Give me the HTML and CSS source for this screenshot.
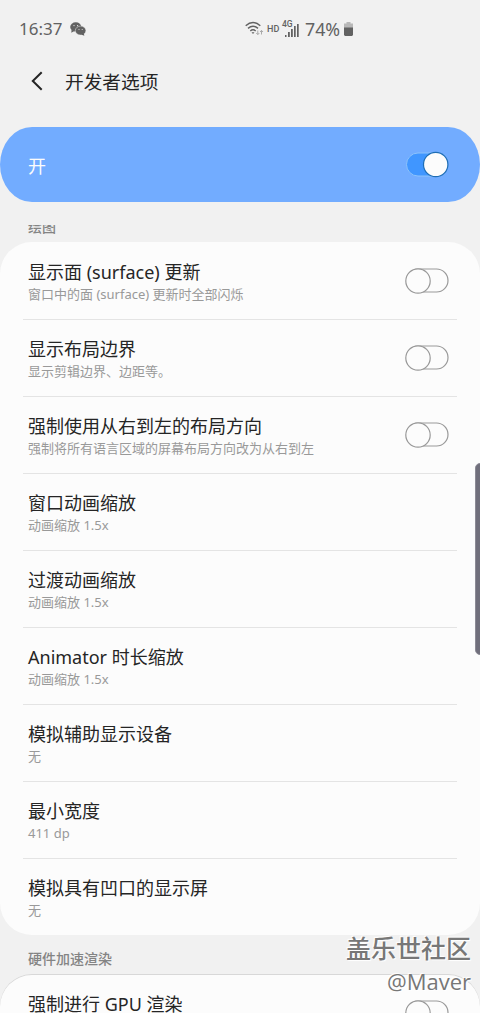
FILE: index.html
```html
<!DOCTYPE html>
<html lang="zh-CN">
<head>
<meta charset="utf-8">
<title>开发者选项</title>
<link rel="stylesheet" href="styles.css">
</head>
<body>
<div class="screen">
  <header class="status">
    <span class="clock">16:37</span>
    <svg class="wechat" width="16" height="14" viewBox="0 0 16 14">
      <path fill="#626262" d="M1.500 8l-.2 2.800 2.700-1.500z"/>
      <ellipse cx="5.800" cy="5" rx="5.600" ry="4.700" fill="#626262"/>
      <ellipse cx="10.600" cy="8.600" rx="5.300" ry="4.500" fill="#626262" stroke="#f1f1f1" stroke-width=".5"/>
      <path fill="#626262" d="M11 12.500l3.300 1.300-.4-2.500z"/>
      <g fill="#f1f1f1"><circle cx="4" cy="3.600" r=".6"/><circle cx="7.600" cy="3.600" r=".6"/><circle cx="9" cy="7.400" r=".5"/><circle cx="12.200" cy="7.400" r=".5"/></g>
    </svg>
    <div class="indicators">
      <svg class="wifi" width="19" height="16" viewBox="0 0 19 16" fill="none" stroke="#626262" stroke-width="1.400">
        <path d="M.7 4.700Q8-1.700 15.300 4.700M3 7.400Q8 3 13 7.400M5.300 10Q8 7.600 10.700 10"/>
        <path d="M6.500 11.200h3L8 13z" fill="#626262" stroke="none"/>
        <path d="M12.800 9.500v4M11.300 12l1.500 1.600 1.500-1.600M16.500 13.500v-4M15 11l1.500-1.600L18 11" stroke="#aaa" stroke-width="1"/>
      </svg>
      <span class="hd">HD</span>
      <span class="signal"><span class="net">4G</span>
        <svg width="17" height="14" viewBox="0 0 17 14" fill="#626262"><path d="M3 12h1.500v2H3zM6 9h1.800v5H6zM9 6h1.800v8H9zM12 3h1.700v11H12zM15 1h1.700v13H15z"/></svg>
      </span>
      <span class="percent">74%</span>
      <svg class="battery" width="9" height="14" viewBox="0 0 9 14"><path fill="#b8b8b8" d="M2.500 0h4v1.500H9V6H0V1.500h2.500z"/><path fill="#626262" d="M0 5.500h9V13l-1 1H1l-1-1z"/></svg>
    </div>
  </header>
  <div class="titlebar">
    <svg class="back" width="12" height="20" viewBox="0 0 12 20" fill="none" stroke="#252525" stroke-width="2"><path d="M10.700 1.200L1.800 10l8.900 8.800"/></svg>
    <h1>开发者选项</h1>
  </div>
  <div class="master"><span>开</span>
    <svg width="44" height="28" viewBox="0 0 44 28"><rect x="1.500" y="2" width="40.500" height="23" rx="11.500" fill="#4096ff" stroke="#8dc3fb"/><circle cx="30.700" cy="13.500" r="12.200" fill="#fcfcfc" stroke="#1d6db5" stroke-width="1.200"/></svg>
  </div>
  <main class="list">
    <h2 class="section first">绘图</h2>
    <div class="card">
      <div class="row"><div><p class="name">显示面 (surface) 更新</p><p class="desc">窗口中的面 (surface) 更新时全部闪烁</p></div>
        <svg class="switch" viewBox="0 0 44 26"><rect x="1.500" y="1" width="41.500" height="23" rx="11.500"/><circle cx="13" cy="13" r="12.200"/></svg></div>
      <div class="row"><div><p class="name">显示布局边界</p><p class="desc">显示剪辑边界、边距等。</p></div>
        <svg class="switch" viewBox="0 0 44 26"><rect x="1.500" y="1" width="41.500" height="23" rx="11.500"/><circle cx="13" cy="13" r="12.200"/></svg></div>
      <div class="row"><div><p class="name">强制使用从右到左的布局方向</p><p class="desc">强制将所有语言区域的屏幕布局方向改为从右到左</p></div>
        <svg class="switch" viewBox="0 0 44 26"><rect x="1.500" y="1" width="41.500" height="23" rx="11.500"/><circle cx="13" cy="13" r="12.200"/></svg></div>
      <div class="row"><div><p class="name">窗口动画缩放</p><p class="desc">动画缩放 1.5x</p></div></div>
      <div class="row"><div><p class="name">过渡动画缩放</p><p class="desc">动画缩放 1.5x</p></div></div>
      <div class="row"><div><p class="name">Animator 时长缩放</p><p class="desc">动画缩放 1.5x</p></div></div>
      <div class="row"><div><p class="name">模拟辅助显示设备</p><p class="desc">无</p></div></div>
      <div class="row"><div><p class="name">最小宽度</p><p class="desc">411 dp</p></div></div>
      <div class="row"><div><p class="name">模拟具有凹口的显示屏</p><p class="desc">无</p></div></div>
    </div>
    <h2 class="section">硬件加速渲染</h2>
    <div class="card next">
      <div class="row"><div><p class="name">强制进行 GPU 渲染</p></div>
        <svg class="switch" viewBox="0 0 44 26"><rect x="1.500" y="1" width="41.500" height="23" rx="11.500"/><circle cx="13" cy="13" r="12.200"/></svg></div>
    </div>
  </main>
  <div class="edge-handle"></div>
  <div class="watermark"><div class="community">盖乐世社区</div><div class="user">@Maver</div></div>
</div>
</body>
</html>
```
FILE: styles.css
```css
* { box-sizing: border-box; }
body, h1, h2, p { margin: 0; }
body { background: #f1f1f1; font-family: "Noto Sans", "Noto Sans CJK SC", sans-serif; color: #252525; }
.screen { position: relative; width: 480px; height: 1013px; overflow: hidden; display: flex; flex-direction: column; }
.status { flex: none; height: 58px; padding-left: 19px; display: flex; align-items: center; color: #626262; font-size: 17px; line-height: 24px; }
.clock { width: 51px; white-space: nowrap; }
.indicators { display: flex; align-items: center; margin-left: 159px; }
.wifi { margin-right: 3px; }
.hd { width: 15px; font: 500 9px/12px Roboto, sans-serif; }
.signal { position: relative; width: 17px; height: 16px; display: flex; align-items: flex-end; margin-right: 6px; }
.signal svg { flex: none; }
.net { position: absolute; left: 0; top: -1px; padding-right: 1px; background: #f1f1f1; font: 500 8.500px/9px Roboto, sans-serif; }
.percent { width: 39px; font-size: 17.800px; white-space: nowrap; }
.titlebar { flex: none; height: 69px; padding: 13px 0 0 31px; display: flex; align-items: flex-start; }
.back { margin-right: 22px; }
h1 { font-size: 18.700px; line-height: 21px; font-weight: 400; }
.master { flex: none; height: 75px; margin-bottom: 23px; border-radius: 32px/37.500px; padding: 0 31px 0 28px; background: #72acff; color: #fcfcfc; font-size: 18px; display: flex; align-items: center; justify-content: space-between; }
.list { flex: 1; min-height: 0; overflow: hidden; }
.section { height: 39px; padding: 14px 28px 0; font-size: 14px; line-height: 20px; font-weight: 500; color: #848484; }
.first { margin-top: -22px; }
.card { background: #fcfcfc; border-radius: 32px; padding: 1px 23px 0; }
.next { box-shadow: inset 0 1px 0 #d8d8d8; }
.row { height: 77px; padding: 17px 8px 0 5px; display: flex; justify-content: space-between; border-bottom: 1px solid #e4e4e4; }
.row:last-child { height: 76px; border-bottom: 0; }
.name { font-size: 18px; line-height: 24px; }
.desc { font-size: 13px; line-height: 20px; color: #999; }
.switch { width: 44px; height: 26px; margin-top: 7.500px; fill: #fcfcfc; stroke: #999; stroke-width: 1.200; }
.edge-handle { position: absolute; left: 475px; top: 463px; width: 10px; height: 192px; border-radius: 5px; background: #706f7c; border: 1px solid #8b8a95; }
.watermark { position: absolute; right: 9px; bottom: 16px; text-align: right; color: #777; text-shadow: -1px -1px 1px #fff, 1px 1px 1px #fff; }
.community { font-size: 25px; line-height: 34px; font-weight: 500; }
.user { font: 400 22px/32px "Open Sans", "Noto Sans", sans-serif; }
```
